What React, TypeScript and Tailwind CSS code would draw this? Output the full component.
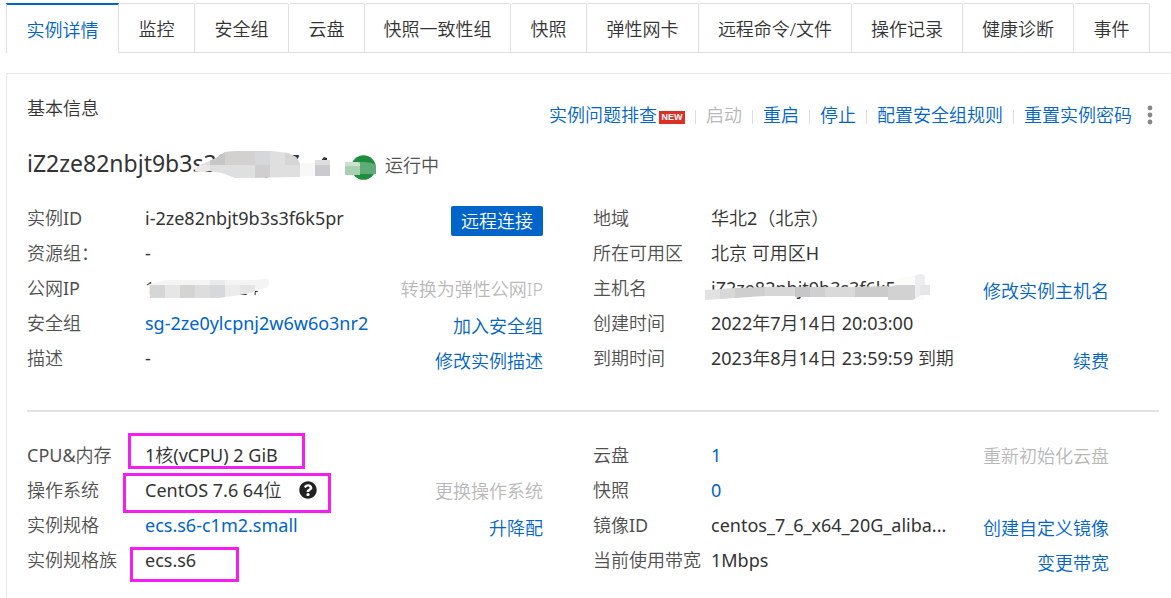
import type { ReactNode } from "react";
import { FaQuestionCircle } from "react-icons/fa";

const tabs = [
  { name: "实例详情", width: "w-[113px]" },
  { name: "监控", width: "w-[76px]" },
  { name: "安全组", width: "w-[94px]" },
  { name: "云盘", width: "w-[76px]" },
  { name: "快照一致性组", width: "w-[146px]" },
  { name: "快照", width: "w-[76px]" },
  { name: "弹性网卡", width: "w-[112px]" },
  { name: "远程命令/文件", width: "w-[153px]" },
  { name: "操作记录", width: "w-[111px]" },
  { name: "健康诊断", width: "w-[111px]" },
  { name: "事件", width: "w-[76px]" },
];

const blue = "text-[#0064c8]";

function Tabs() {
  return (
    <nav className="flex pt-[3px]" role="tablist">
      {tabs.map((tab, i) => (
        <button
          key={tab.name}
          role="tab"
          aria-selected={i === 0}
          className={`${tab.width} flex h-[50px] shrink-0 items-center justify-center border-r border-[#e0e0e0] pt-0.5 whitespace-nowrap ${
            i === 0
              ? "border-t-2 border-l border-t-[#0064c8] text-[#0064c8]"
              : "rounded-t-xs border-t border-b text-[#333]"
          }`}
        >
          {tab.name}
        </button>
      ))}
      <div className="flex-1 border-b border-[#e0e0e0]" />
    </nav>
  );
}

function Action({ children, disabled = false }: { children: ReactNode; disabled?: boolean }) {
  if (disabled) {
    return (
      <button disabled className="whitespace-nowrap text-[#b8b8b8]">
        {children}
      </button>
    );
  }
  return (
    <a href="#" className={`${blue} whitespace-nowrap`}>
      {children}
    </a>
  );
}

function Separator() {
  return <span className="mt-1 h-[14px] w-px bg-[#dedede]" />;
}

function Toolbar() {
  return (
    <div className="flex items-center gap-[10px]">
      <div className="flex items-center gap-0.5">
        <Action>实例问题排查</Action>
        <span className="mt-1 flex h-[13px] w-[26px] items-center justify-center bg-[#dc3027] font-['Liberation_Sans',sans-serif] text-[9px] font-bold text-white">
          NEW
        </span>
      </div>
      <Separator />
      <Action disabled>启动</Action>
      <Separator />
      <Action>重启</Action>
      <Separator />
      <Action>停止</Action>
      <Separator />
      <Action>配置安全组规则</Action>
      <Separator />
      <Action>重置实例密码</Action>
      <button aria-label="更多" className="ml-1">
        <svg width="8" height="20" viewBox="0 0 8 20" fill="#888">
          <circle cx="4" cy="3" r="2.4" />
          <circle cx="4" cy="10" r="2.4" />
          <circle cx="4" cy="17" r="2.4" />
        </svg>
      </button>
    </div>
  );
}

function NameMask() {
  return (
    <svg className="absolute top-0 left-0" width="360" height="36" viewBox="27 147 360 36" aria-hidden="true">
      <circle cx="363.5" cy="167.5" r="12.3" fill="#1e8e3e" />
      <path d="M345 162h15v13h-15z" fill="#a9d0b0" />
      <path d="M360 162c5 0 11 0 16 3v9h-16z" fill="#5fab78" />
      <path d="M345 162h12l3 2v2h-15z" fill="#cbe3ce" />
      <path d="M320 162l4-5 3 1v5z" fill="#333" />
      <clipPath id="name-blob">
        <path d="M200 165l7-3 9-4 9-6 12-1h35l16 2 8 4 4 7v13l-65 1-13-5-12-2-10 1-7-1z" />
      </clipPath>
      <g clipPath="url(#name-blob)">
        <path d="M195 150h110v28h-110z" fill="#dfdfdf" />
        <path d="M210 150h15v15h-15z" fill="#c6c6c6" />
        <path d="M225 150h30v15h-30z" fill="#d2d1d0" />
        <path d="M255 150h15v15h-15z" fill="#d5d7da" />
        <path d="M285 150h15v15h-15z" fill="#d5d5d5" />
        <path d="M255 165h15v13h-15z" fill="#cfcfcf" />
        <path d="M195 165h15v13h-15z" fill="#e9e8e8" />
      </g>
      <path d="M300 163h15v13h-15z" fill="#f7f8f7" />
      <path d="M315 160h15v5h-15z" fill="#dededf" />
      <path d="M315 165h15v11h-15z" fill="#cacbce" />
    </svg>
  );
}

function AddressMask() {
  return (
    <svg className="absolute top-0 left-0" width="130" height="35" viewBox="145 271 130 35" aria-hidden="true">
      <path d="M150 284l15-4h90l13-1q2 5-1 8l-12 3h-105z" fill="#f4f4f4" />
      <path d="M150 285h15v13h-15z" fill="#d6d6d5" />
      <path d="M165 285h15v13h-15z" fill="#e6e6e6" />
      <path d="M180 285h15v13h-15z" fill="#d4d4d2" />
      <path d="M195 285h15v13h-15z" fill="#dddddd" />
      <path d="M210 280h15v5h-15z" fill="#e9eaeb" />
      <path d="M210 285h15v12l-6 1h-9z" fill="#d6d8dc" />
      <path d="M225 285h15v10l-15 2z" fill="#ebebeb" />
      <path d="M240 285h15v7l-15 3z" fill="#e5e5e5" />
      <path d="M255 280l13-1q2 6-2 9l-11 3z" fill="#f4f4f4" />
    </svg>
  );
}

function HostMask() {
  return (
    <svg className="absolute top-0 -left-2" width="232" height="35" viewBox="703 271 232 35" aria-hidden="true">
      <path d="M896 279l28-5v26h-28z" fill="#fbfbfa" />
      <path d="M705 290l15-1v10l-15 1z" fill="#e3e2e2" />
      <path d="M720 289l15-1v10l-15 1z" fill="#d7d7d8" />
      <path d="M735 288l30-1v9l-30 2z" fill="#cecece" />
      <path d="M765 287h30v9h-30z" fill="#d6d6d6" />
      <path d="M795 287h15v10h-15z" fill="#c6c6c6" />
      <path d="M810 287h15v10h-15z" fill="#cfced0" />
      <path d="M825 287h30v10h-30z" fill="#dad9d9" />
      <path d="M855 287l33-1v11h-33z" fill="#cbcbcb" />
      <path d="M888 287l8-2h19v14l-3 1h-24z" fill="#d2d2d2" />
      <path d="M915 276q5-4 10 0v10h5v9h-9l-6 4z" fill="#ecedee" />
      <path d="M920 285h10v10h-10z" fill="#e5e6e8" />
    </svg>
  );
}

function Field({
  label,
  children,
  action,
  raised = false,
}: {
  label: string;
  children: ReactNode;
  action?: ReactNode;
  raised?: boolean;
}) {
  return (
    <div className="grid h-[35px] grid-cols-[118px_1fr_auto]">
      <dt className="flex items-center pb-0.5 whitespace-nowrap text-[#505050]">
        <Mixed text={label} />
      </dt>
      <dd className="relative flex min-w-0 items-center pb-0.5 whitespace-nowrap text-[#333]">
        {typeof children === "string" ? <Mixed text={children} /> : children}
      </dd>
      <dd className={`flex items-center ${raised ? "pt-0" : "pt-1"}`}>{action}</dd>
    </div>
  );
}

// Latin runs are set in the regular weight, Chinese runs keep the lighter body weight.
function Mixed({ text }: { text: string }) {
  return (
    <span>
      {text.split(/([\x20-\x7e]+)/).map((part, i) =>
        i % 2 ? (
          <span key={i} className="font-normal">
            {part}
          </span>
        ) : (
          part
        ),
      )}
    </span>
  );
}

function Frame({ className }: { className: string }) {
  return <span className={`${className} pointer-events-none absolute border-3 border-[#f41df2]`} />;
}

export default function App() {
  return (
    <main className="min-h-screen overflow-hidden bg-white pl-[6px] font-['Noto_Sans','Noto_Sans_CJK_SC',sans-serif] text-[18px] leading-7 font-[350]">
      <Tabs />
      <section className="mt-5 min-h-[540px] border-t border-l border-[#e6e6e6] pt-5 pr-3 pb-4 pl-5">
        <header className="flex h-[42px] items-center justify-between pr-[5px]">
          <h2 className="self-start font-[350] text-[#333]">基本信息</h2>
          <Toolbar />
        </header>

        <div className="relative mt-[11px] flex h-9 items-center">
          <h1 className="w-[358px] pb-1 text-[23px] font-normal text-[#333]">iZ2ze82nbjt9b3s3f6k5prZ</h1>
          <NameMask />
          <span className="text-[#505050]">运行中</span>
        </div>

        <div className="mt-[18px] grid grid-cols-2">
          <dl className="pr-[50px]">
            <Field
              label="实例ID"
              action={
                <button className="flex h-[30px] w-[92px] items-center justify-center rounded-xs bg-[#0064c8] text-white">
                  远程连接
                </button>
              }
            >
              i-2ze82nbjt9b3s3f6k5pr
            </Field>
            <Field label="资源组：">-</Field>
            <Field label="公网IP" raised action={<Action disabled>转换为弹性公网IP</Action>}>
              <span className="flex w-[113px] justify-between">
                <span>12</span>
                <span>24</span>
              </span>
              <AddressMask />
            </Field>
            <Field label="安全组" action={<Action>加入安全组</Action>}>
              <a href="#" className={`${blue} font-normal`}>sg-2ze0ylcpnj2w6w6o3nr2</a>
            </Field>
            <Field label="描述" action={<Action>修改实例描述</Action>}>-</Field>
          </dl>
          <dl className="pr-[50px]">
            <Field label="地域">华北2（北京）</Field>
            <Field label="所在可用区">北京 可用区H</Field>
            <Field label="主机名" action={<Action>修改实例主机名</Action>}>
              <Mixed text="iZ2ze82nbjt9b3s3f6k5" />
              <HostMask />
            </Field>
            <Field label="创建时间">2022年7月14日 20:03:00</Field>
            <Field label="到期时间" action={<Action>续费</Action>}>2023年8月14日 23:59:59 到期</Field>
          </dl>
        </div>

        <hr className="mt-[34px] border-t-2 border-[#e2e2e2]" />

        <div className="mt-[26px] grid grid-cols-2">
          <dl className="pr-[50px]">
            <Field label="CPU&内存">
              <Mixed text="1核(vCPU) 2 GiB" />
              <Frame className="-top-[5px] -left-[17px] h-9 w-[177px]" />
            </Field>
            <Field label="操作系统" raised action={<Action disabled>更换操作系统</Action>}>
              <Mixed text="CentOS 7.6 64位" />
              <button aria-label="帮助" className="ml-[18px] text-[#222]">
                <FaQuestionCircle size={18} />
              </button>
              <Frame className="top-0 -left-[22px] h-10 w-[208px]" />
            </Field>
            <Field label="实例规格" action={<Action>升降配</Action>}>
              <a href="#" className={`${blue} font-normal`}>ecs.s6-c1m2.small</a>
            </Field>
            <Field label="实例规格族">
              <Mixed text="ecs.s6" />
              <Frame className="top-1 -left-[15px] h-[35px] w-[109px]" />
            </Field>
          </dl>
          <dl className="pr-[50px]">
            <Field label="云盘" raised action={<Action disabled>重新初始化云盘</Action>}>
              <a href="#" className={`${blue} font-normal`}>1</a>
            </Field>
            <Field label="快照">
              <a href="#" className={`${blue} font-normal`}>0</a>
            </Field>
            <Field label="镜像ID" action={<Action>创建自定义镜像</Action>}>centos_7_6_x64_20G_aliba...</Field>
            <Field label="当前使用带宽" action={<Action>变更带宽</Action>}>1Mbps</Field>
          </dl>
        </div>
      </section>
    </main>
  );
}
